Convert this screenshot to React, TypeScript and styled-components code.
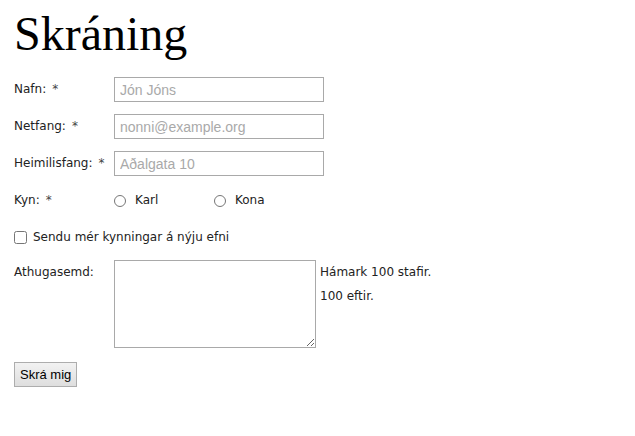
import styled, { createGlobalStyle } from "styled-components";

const Global = createGlobalStyle`
body {
  margin: 0;
  padding: 14px;
  background: #fff;
  font-family: "DejaVu Sans", Verdana, sans-serif;
  font-size: 12px;
  color: #222;
}
`;

const Title = styled.h1`
font-family: "Liberation Serif", "Times New Roman", serif;
font-size: 48px;
font-weight: normal;
color: #000;
margin: -8px 0 15px 0;
line-height: 56px;
`;

const Form = styled.form`
display: flex;
flex-direction: column;
`;

const Row = styled.div<{ $gap?: number }>`
display: flex;
align-items: flex-start;
margin-bottom: ${p => p.$gap ?? 12}px;
`;

const Label = styled.label`
width: 100px;
flex-shrink: 0;
line-height: 25px;
`;

const Req = styled.span`
margin-left: 6px;
color: #444;
`;

const Input = styled.input`
box-sizing: border-box;
width: 210px;
height: 25px;
border: 1px solid #a9a9a9;
padding: 2px 5px;
font-family: "Liberation Sans", Arial, sans-serif;
font-size: 14px;
&::placeholder {
  color: #a9a9a9;
}
`;

const RadioOption = styled.label`
width: 100px;
display: flex;
align-items: center;
line-height: 25px;
`;

const Radio = styled.input`
margin: 0 9px 0 0;
width: 12px;
height: 12px;
`;

const Check = styled.label`
display: flex;
align-items: center;
line-height: 20px;
`;

const CheckBox = styled.input`
margin: 0 6px 0 0;
width: 13px;
height: 13px;
`;

const TextArea = styled.textarea`
box-sizing: border-box;
width: 202px;
height: 88px;
border: 1px solid #a9a9a9;
margin: 0;
`;

const Hint = styled.div`
margin-left: 4px;
display: flex;
flex-direction: column;
gap: 8px;
line-height: 16px;
padding-top: 4px;
`;

const Button = styled.button`
align-self: flex-start;
height: 25px;
padding: 0 5px;
font-family: "Liberation Sans", Arial, sans-serif;
font-size: 13px;
color: #000;
border: 1px solid #adadad;
border-radius: 0;
background: linear-gradient(#f2f2f2, #dedede);
`;

export default function App() {
  return (
    <>
      <Global />
      <Title>Skráning</Title>
      <Form onSubmit={e => e.preventDefault()}>
        <Row>
          <Label>Nafn:<Req>*</Req></Label>
          <Input placeholder="Jón Jóns" />
        </Row>
        <Row>
          <Label>Netfang:<Req>*</Req></Label>
          <Input placeholder="nonni@example.org" />
        </Row>
        <Row>
          <Label>Heimilisfang:<Req>*</Req></Label>
          <Input placeholder="Aðalgata 10" />
        </Row>
        <Row $gap={14}>
          <Label>Kyn:<Req>*</Req></Label>
          <RadioOption><Radio type="radio" name="kyn" />Karl</RadioOption>
          <RadioOption><Radio type="radio" name="kyn" />Kona</RadioOption>
        </Row>
        <Row $gap={13}>
          <Check><CheckBox type="checkbox" />Sendu mér kynningar á nýju efni</Check>
        </Row>
        <Row $gap={14}>
          <Label>Athugasemd:</Label>
          <TextArea />
          <Hint>
            <span>Hámark 100 stafir.</span>
            <span>100 eftir.</span>
          </Hint>
        </Row>
        <Button type="submit">Skrá mig</Button>
      </Form>
    </>
  );
}
